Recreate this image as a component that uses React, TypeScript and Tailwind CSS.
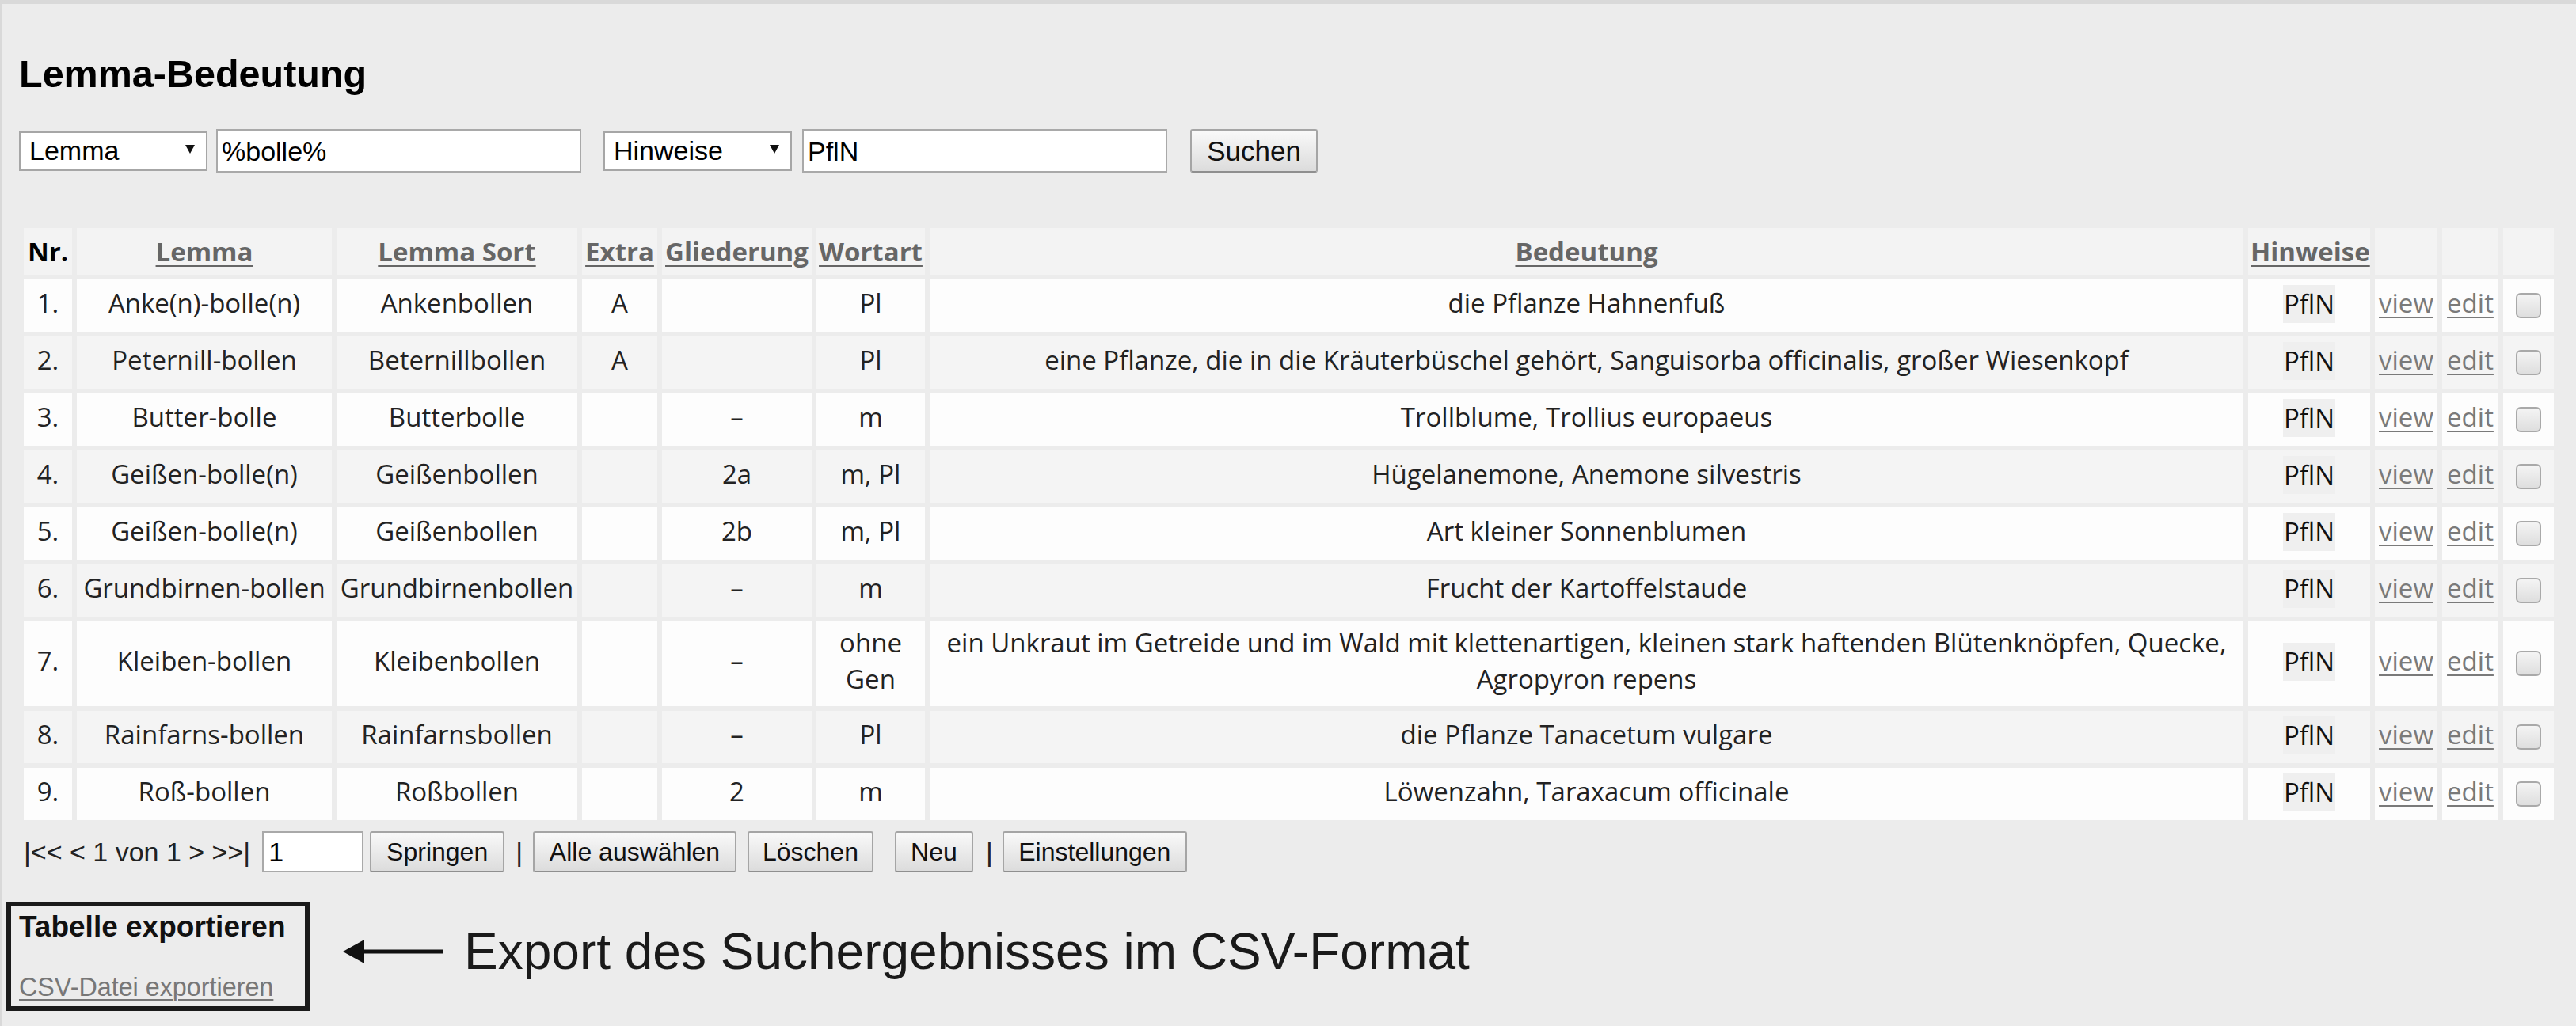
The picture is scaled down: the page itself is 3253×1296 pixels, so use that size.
import React from "react";

type Row = {
  nr: string;
  lemma: string;
  sort: string;
  extra: string;
  gl: string;
  wa: React.ReactNode;
  bed: React.ReactNode;
};

const rows: Row[] = [
  { nr: "1.", lemma: "Anke(n)-bolle(n)", sort: "Ankenbollen", extra: "A", gl: "", wa: "Pl", bed: "die Pflanze Hahnenfuß" },
  { nr: "2.", lemma: "Peternill-bollen", sort: "Beternillbollen", extra: "A", gl: "", wa: "Pl", bed: "eine Pflanze, die in die Kräuterbüschel gehört, Sanguisorba officinalis, großer Wiesenkopf" },
  { nr: "3.", lemma: "Butter-bolle", sort: "Butterbolle", extra: "", gl: "–", wa: "m", bed: "Trollblume, Trollius europaeus" },
  { nr: "4.", lemma: "Geißen-bolle(n)", sort: "Geißenbollen", extra: "", gl: "2a", wa: "m, Pl", bed: "Hügelanemone, Anemone silvestris" },
  { nr: "5.", lemma: "Geißen-bolle(n)", sort: "Geißenbollen", extra: "", gl: "2b", wa: "m, Pl", bed: "Art kleiner Sonnenblumen" },
  { nr: "6.", lemma: "Grundbirnen-bollen", sort: "Grundbirnenbollen", extra: "", gl: "–", wa: "m", bed: "Frucht der Kartoffelstaude" },
  {
    nr: "7.",
    lemma: "Kleiben-bollen",
    sort: "Kleibenbollen",
    extra: "",
    gl: "–",
    wa: (
      <>
        ohne
        <br />
        Gen
      </>
    ),
    bed: (
      <>
        ein Unkraut im Getreide und im Wald mit klettenartigen, kleinen stark haftenden Blütenknöpfen, Quecke,
        <br />
        Agropyron repens
      </>
    ),
  },
  { nr: "8.", lemma: "Rainfarns-bollen", sort: "Rainfarnsbollen", extra: "", gl: "–", wa: "Pl", bed: "die Pflanze Tanacetum vulgare" },
  { nr: "9.", lemma: "Roß-bollen", sort: "Roßbollen", extra: "", gl: "2", wa: "m", bed: "Löwenzahn, Taraxacum officinale" },
];

function SelectBox({ label }: { label: string }) {
  return (
    <div className="relative flex h-[50px] w-[238px] items-center border-2 border-b-[3px] border-[#a6a6a6] bg-white pl-[11px] text-[34px] leading-none">
      <span>{label}</span>
      <svg className="absolute right-[14px] top-[15px]" width="12" height="11" viewBox="0 0 12 11">
        <polygon points="0,0 12,0 6,11" fill="#111" />
      </svg>
    </div>
  );
}

function Btn({ label, w, h, size }: { label: string; w: string; h: string; size: string }) {
  return (
    <div
      className={`flex items-center justify-center rounded-[3px] border-2 border-[#a5a5a5] border-b-[#8f8f8f] bg-linear-to-b from-[#f9f9f9] to-[#dcdcdc] leading-none text-[#111] ${w} ${h} ${size}`}
    >
      {label}
    </div>
  );
}

const td = "h-[66px] px-[3px] pt-[4px] pb-[11px] text-center leading-[46px] whitespace-nowrap";
const th = "h-[59px] px-[3px] py-[6px] text-center leading-[46px] font-bold whitespace-nowrap bg-[#f3f3f3]";
const hlink = "text-[#666] underline decoration-[2px] underline-offset-[5px]";
const link = "text-[#7a7a7a] underline decoration-[2px] underline-offset-[5px]";

export default function App() {
  return (
    <div className="min-h-screen w-full border-l-[3px] border-t-[5px] border-[#d9d9d9] bg-[#ececec] font-['Liberation_Sans',Arial,sans-serif] text-black">
      <h1 className="pl-[21px] pt-[60px] text-[48.5px] font-bold leading-[56px]">Lemma-Bedeutung</h1>

      <div className="mt-[42px] flex h-[55px] items-center pl-[21px]">
        <SelectBox label="Lemma" />
        <div className="ml-[11px] flex h-[55px] w-[461px] items-center border-2 border-[#a9a9a9] bg-white pl-[5px] text-[34px] leading-none">
          %bolle%
        </div>
        <div className="ml-[28px]">
          <SelectBox label="Hinweise" />
        </div>
        <div className="ml-[13px] flex h-[55px] w-[461px] items-center border-2 border-[#a9a9a9] bg-white pl-[5px] text-[34px] leading-none">
          PflN
        </div>
        <div className="ml-[29px]">
          <Btn label="Suchen" w="w-[161px]" h="h-[55px]" size="text-[35px]" />
        </div>
      </div>

      <div className="mt-[64px] pl-[21px] pr-[22px]">
        <table className="w-full table-fixed border-separate border-spacing-[6px] font-['Open_Sans',sans-serif] text-[33px] text-[#222]">
          <thead>
            <tr>
              <th className={`${th} w-[61px] text-black`}>Nr.</th>
              <th className={`${th} w-[322px]`}>
                <span className={hlink}>Lemma</span>
              </th>
              <th className={`${th} w-[304px]`}>
                <span className={hlink}>Lemma Sort</span>
              </th>
              <th className={`${th} w-[95px]`}>
                <span className={hlink}>Extra</span>
              </th>
              <th className={`${th} w-[189px]`}>
                <span className={hlink}>Gliederung</span>
              </th>
              <th className={`${th} w-[137px]`}>
                <span className={hlink}>Wortart</span>
              </th>
              <th className={th}>
                <span className={hlink}>Bedeutung</span>
              </th>
              <th className={`${th} w-[154px]`}>
                <span className={hlink}>Hinweise</span>
              </th>
              <th className={`${th} w-[79px]`}></th>
              <th className={`${th} w-[71px]`}></th>
              <th className={`${th} w-[64px]`}></th>
            </tr>
          </thead>
          <tbody>
            {rows.map((r, i) => {
              const bg = i % 2 === 0 ? "bg-[#fdfdfd]" : "bg-[#f4f4f4]";
              return (
                <tr key={r.nr}>
                  <td className={`${td} ${bg}`}>{r.nr}</td>
                  <td className={`${td} ${bg}`}>{r.lemma}</td>
                  <td className={`${td} ${bg}`}>{r.sort}</td>
                  <td className={`${td} ${bg}`}>{r.extra}</td>
                  <td className={`${td} ${bg}`}>{r.gl}</td>
                  <td className={`${td} ${bg}`}>{r.wa}</td>
                  <td className={`${td} ${bg}`}>{r.bed}</td>
                  <td className={`${td} ${bg}`}>
                    <span className="inline-block h-[48px] bg-[#efefef] px-[1px] align-middle leading-[48px] text-[#111]">PflN</span>
                  </td>
                  <td className={`${td} ${bg}`}>
                    <span className={link}>view</span>
                  </td>
                  <td className={`${td} ${bg}`}>
                    <span className={link}>edit</span>
                  </td>
                  <td className={`${td} ${bg}`}>
                    <span className="inline-block h-[32px] w-[32px] rounded-[6px] border-2 border-[#a9a9a9] bg-linear-to-b from-[#f4f4f4] to-[#dedede] align-middle"></span>
                  </td>
                </tr>
              );
            })}
          </tbody>
        </table>
      </div>

      <div className="mt-[8px] flex h-[52px] items-center pl-[27px] text-[34px] leading-none text-[#222]">
        <span>{"|<< < 1 von 1 > >>|"}</span>
        <div className="ml-[15px] flex h-[52px] w-[128px] items-center border-2 border-[#a9a9a9] bg-white pl-[6px] text-[34px] text-black">
          1
        </div>
        <div className="ml-[8px]">
          <Btn label="Springen" w="w-[170px]" h="h-[52px]" size="text-[32px]" />
        </div>
        <span className="ml-[14px]">|</span>
        <div className="ml-[13px]">
          <Btn label="Alle auswählen" w="w-[257px]" h="h-[52px]" size="text-[32px]" />
        </div>
        <div className="ml-[14px]">
          <Btn label="Löschen" w="w-[159px]" h="h-[52px]" size="text-[32px]" />
        </div>
        <div className="ml-[27px]">
          <Btn label="Neu" w="w-[99px]" h="h-[52px]" size="text-[32px]" />
        </div>
        <span className="ml-[16px]">|</span>
        <div className="ml-[12px]">
          <Btn label="Einstellungen" w="w-[233px]" h="h-[52px]" size="text-[32px]" />
        </div>
      </div>

      <div className="mt-[37px] flex items-start pl-[5px]">
        <div className="h-[138px] w-[383px] border-[6px] border-[#1a1a1a] pl-[10px] pt-[6px]">
          <div className="text-[37px] font-bold leading-[40px] text-[#111]">Tabelle exportieren</div>
          <div className="mt-[38px] text-[32.3px] leading-[36px]">
            <span className="text-[#777] underline decoration-[2px] underline-offset-[4px]">CSV-Datei exportieren</span>
          </div>
        </div>
        <div className="ml-[42px] mt-[27px] flex items-center">
          <svg width="126" height="30" viewBox="0 0 126 30">
            <polygon points="0,15 27,0 27,30" fill="#111" />
            <rect x="25" y="12.5" width="101" height="5" fill="#111" />
          </svg>
          <span className="ml-[27px] text-[64px] leading-[72px] text-[#1a1a1a]">Export des Suchergebnisses im CSV-Format</span>
        </div>
      </div>
    </div>
  );
}
